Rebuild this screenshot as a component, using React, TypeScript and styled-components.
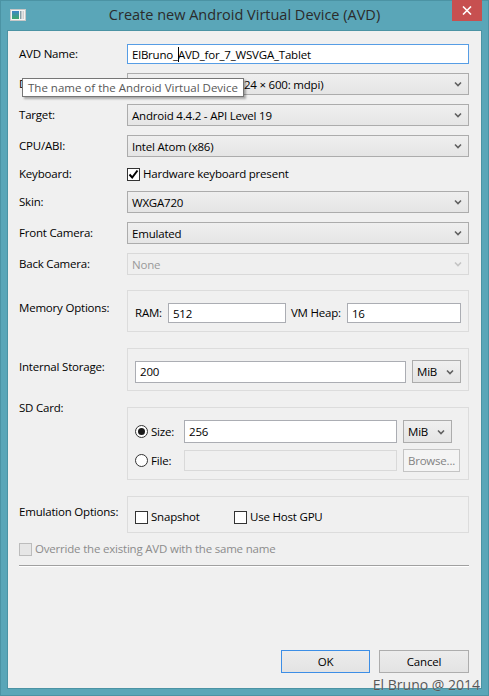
import styled, { createGlobalStyle } from "styled-components"

const GlobalStyle = createGlobalStyle`
    html, body {
        margin: 0;
        padding: 0;
        background: #5aa6b8;
    }
    body {
        font-family: "Segoe UI", "Open Sans", "Noto Sans", sans-serif;
        font-size: 11.5px;
        letter-spacing: -0.2px;
        color: #000;
    }
    * {
        box-sizing: border-box;
    }
`

const Window = styled.div`
    position: relative;
    width: 489px;
    height: 696px;
    display: flex;
    flex-direction: column;
    background: #5aa6b8;
    box-shadow: inset 0 0 0 1px #4b93a4;
    overflow: hidden;
`
const TitleBar = styled.div`
    height: 31px;
    display: grid;
    grid-template-columns: 1fr auto 1fr;
    align-items: start;
`
const IconSlot = styled.div`
    padding: 9px 0 0 10px;
    line-height: 0;
`
const Title = styled.div`
    padding-top: 5px;
    font-size: 14.5px;
    letter-spacing: 0;
    line-height: 20px;
    color: #2b2b2b;
    white-space: nowrap;
`
const CloseButton = styled.div`
    justify-self: end;
    margin-right: 7px;
    width: 30px;
    height: 21px;
    background: #c75050;
    display: flex;
    align-items: center;
    justify-content: center;
`
const Client = styled.div`
    position: relative;
    flex: 1;
    margin: 0 8px 8px 8px;
    padding: 13px 12px 15px 11px;
    background: #f0f0f0;
    box-shadow: 0 0 0 1px #4b93a4;
    display: flex;
    flex-direction: column;
`
const Form = styled.div`
    display: grid;
    grid-template-columns: 108px 1fr;
    row-gap: 9px;
    align-items: center;
`
const Options = styled(Form)`
    margin-top: 15px;
    row-gap: 16px;
`
const Label = styled.div<{ $top?: boolean; $shift?: boolean }>`
    line-height: 16px;
    white-space: nowrap;
    align-self: ${p => (p.$top ? "start" : "center")};
    margin-top: ${p => (p.$top ? "-7px" : "0")};
    padding-bottom: ${p => (p.$shift ? "6px" : "0")};
`
const FieldLabel = styled.span`
    line-height: 16px;
    white-space: nowrap;
`
const TextBox = styled.div<{ $focused?: boolean; $disabled?: boolean; $h?: number; $w?: number }>`
    height: ${p => p.$h ?? 20}px;
    min-width: 0;
    flex: ${p => (p.$w ? `0 0 ${p.$w}px` : "1")};
    display: flex;
    align-items: center;
    padding: 0 4px;
    background: ${p => (p.$disabled ? "#f0f0f0" : "#fff")};
    border: 1px solid ${p => (p.$focused ? "#569de5" : p.$disabled ? "#d9d9d9" : "#abadb3")};
    white-space: nowrap;
    overflow: hidden;
`
const Caret = styled.span`
    display: inline-block;
    width: 1px;
    height: 15px;
    background: #000;
    margin: 0 -1px 0 0;
`
const ComboBox = styled.div<{ $disabled?: boolean; $w?: number }>`
    height: ${p => (p.$w ? 23 : 22)}px;
    width: ${p => (p.$w ? `${p.$w}px` : "auto")};
    flex: none;
    display: flex;
    align-items: center;
    justify-content: space-between;
    padding: 0 6px 0 4px;
    color: ${p => (p.$disabled ? "#9a9a9a" : "#000")};
    background: ${p => (p.$disabled ? "#efefef" : "linear-gradient(#efefef, #e5e5e5)")};
    border: 1px solid ${p => (p.$disabled ? "#d9d9d9" : "#acacac")};
    white-space: nowrap;
    overflow: hidden;
`
const CheckRow = styled.div`
    display: flex;
    align-items: center;
    gap: 3px;
    height: 16px;
    line-height: 16px;
    white-space: nowrap;
`
const Box = styled.span<{ $disabled?: boolean }>`
    width: 13px;
    height: 13px;
    flex: none;
    display: flex;
    align-items: center;
    justify-content: center;
    background: ${p => (p.$disabled ? "#e6e6e6" : "#fff")};
    border: 1px solid ${p => (p.$disabled ? "#bcbcbc" : "#333")};
`
const Radio = styled.span<{ $on?: boolean }>`
    width: 13px;
    height: 13px;
    flex: none;
    border-radius: 50%;
    border: 1px solid #333;
    background: #fff;
    display: flex;
    align-items: center;
    justify-content: center;
    &::after {
        content: "";
        display: ${p => (p.$on ? "block" : "none")};
        width: 7px;
        height: 7px;
        border-radius: 50%;
        background: #1a1a1a;
    }
`
const DisabledText = styled.span`
    color: #8c8c8c;
`
const Group = styled.div<{ $pad: string }>`
    border: 1px solid #dcdcdc;
    padding: ${p => p.$pad};
`
const InlineRow = styled.div`
    display: flex;
    align-items: center;
    gap: 6px;
`
const MemoryRow = styled(InlineRow)`
    gap: 0;
    & > span {
        margin-right: 6px;
    }
    & > div + span {
        margin-left: 5px;
    }
`
const SdGrid = styled.div`
    display: grid;
    grid-template-columns: 43px 1fr 57px;
    column-gap: 6px;
    row-gap: 6px;
    align-items: center;
`
const EmulationRow = styled.div`
    display: grid;
    grid-template-columns: 99px auto;
`
const PushButton = styled.div<{ $default?: boolean; $disabled?: boolean; $w?: number }>`
    width: ${p => (p.$w ? `${p.$w}px` : "auto")};
    height: 23px;
    display: flex;
    align-items: center;
    justify-content: center;
    color: ${p => (p.$disabled ? "#838383" : "#000")};
    background: ${p => (p.$disabled ? "#f4f4f4" : "linear-gradient(#ececec, #e3e3e3)")};
    border: 1px solid ${p => (p.$default ? "#3c8ee6" : p.$disabled ? "#c4c4c4" : "#adadad")};
    white-space: nowrap;
`
const Override = styled(CheckRow)`
    margin-top: 8px;
    color: #8c8c8c;
`
const Separator = styled.div`
    margin-top: 8px;
    border-top: 1px solid #a0a0a0;
    border-bottom: 1px solid #fff;
`
const ButtonBar = styled.div`
    margin-top: auto;
    display: flex;
    justify-content: flex-end;
    gap: 9px;
`
const Tooltip = styled.div`
    position: absolute;
    left: 14px;
    top: 47px;
    height: 19px;
    padding: 0 5px;
    display: flex;
    align-items: center;
    letter-spacing: 0;
    background: #fff;
    color: #575757;
    border: 1px solid #767676;
    box-shadow: 2px 2px 2px rgba(0, 0, 0, 0.3);
    white-space: nowrap;
`
const Watermark = styled.div`
    position: absolute;
    right: 9px;
    bottom: 2px;
    font-size: 14px;
    letter-spacing: 0;
    line-height: 18px;
    color: #585858;
    text-shadow: 0 0 1px rgba(255, 255, 255, 0.5);
    white-space: nowrap;
`

function Chevron({ disabled }: { disabled?: boolean }) {
    return (
        <svg width="8" height="6" viewBox="0 0 8 6">
            <path d="M1 1.5 L4 4.5 L7 1.5" fill="none" stroke={disabled ? "#c4c4c4" : "#606060"} strokeWidth="1.6" />
        </svg>
    )
}

function Check() {
    return (
        <svg width="11" height="11" viewBox="0 0 11 11">
            <path d="M1.5 5.5 L4.2 8.5 L9.5 1.5" fill="none" stroke="#000" strokeWidth="2" />
        </svg>
    )
}

function AppIcon() {
    return (
        <svg width="16" height="12" viewBox="0 0 16 12">
            <defs>
                <linearGradient id="scr" x1="0" y1="0" x2="0" y2="1">
                    <stop offset="0" stopColor="#3f86c8" />
                    <stop offset="1" stopColor="#3fa86a" />
                </linearGradient>
            </defs>
            <rect x="0.5" y="0.5" width="15" height="11" fill="#f4f4f4" stroke="#c8c8c8" />
            <rect x="2" y="2" width="7" height="8" fill="url(#scr)" />
            <rect x="10" y="2" width="1.5" height="8" fill="#8aa0a8" />
            <rect x="12.5" y="2" width="1.5" height="8" fill="#d0d0d0" />
        </svg>
    )
}

function Combo({ text, disabled, w }: { text: string; disabled?: boolean; w?: number }) {
    return (
        <ComboBox $disabled={disabled} $w={w}>
            <span>{text}</span>
            <Chevron disabled={disabled} />
        </ComboBox>
    )
}

function CreateAvdDialog() {
    return (
        <Window>
            <TitleBar>
                <IconSlot>
                    <AppIcon />
                </IconSlot>
                <Title>Create new Android Virtual Device (AVD)</Title>
                <CloseButton>
                    <svg width="10" height="9" viewBox="0 0 10 9">
                        <path d="M1 0.5 L9 8.5 M9 0.5 L1 8.5" stroke="#fff" strokeWidth="1.6" />
                    </svg>
                </CloseButton>
            </TitleBar>
            <Client>
                <Form>
                    <Label>AVD Name:</Label>
                    <TextBox $focused>
                        ElBruno_<Caret />AVD_for_7_WSVGA_Tablet
                    </TextBox>
                    <Label>Device:</Label>
                    <Combo text={"7\" WSVGA (Tablet) (1024 × 600: mdpi)"} />
                    <Label>Target:</Label>
                    <Combo text="Android 4.4.2 - API Level 19" />
                    <Label>CPU/ABI:</Label>
                    <Combo text="Intel Atom (x86)" />
                    <Label>Keyboard:</Label>
                    <CheckRow>
                        <Box>
                            <Check />
                        </Box>
                        Hardware keyboard present
                    </CheckRow>
                    <Label>Skin:</Label>
                    <Combo text="WXGA720" />
                    <Label>Front Camera:</Label>
                    <Combo text="Emulated" />
                    <Label>Back Camera:</Label>
                    <Combo text="None" disabled />
                </Form>

                <Options>
                    <Label $shift>Memory Options:</Label>
                    <Group $pad="12px 7px 8px 7px">
                        <MemoryRow>
                            <FieldLabel>RAM:</FieldLabel>
                            <TextBox $w={118}>512</TextBox>
                            <FieldLabel>VM Heap:</FieldLabel>
                            <TextBox>16</TextBox>
                        </MemoryRow>
                    </Group>

                    <Label $shift>Internal Storage:</Label>
                    <Group $pad="11px 7px 7px 7px">
                        <InlineRow>
                            <TextBox $h={22}>200</TextBox>
                            <Combo text="MiB" w={49} />
                        </InlineRow>
                    </Group>

                    <Label $top>SD Card:</Label>
                    <Group $pad="12px 8px 7px 7px">
                        <SdGrid>
                            <CheckRow>
                                <Radio $on />
                                Size:
                            </CheckRow>
                            <TextBox $h={23}>256</TextBox>
                            <Combo text="MiB" w={49} />
                            <CheckRow>
                                <Radio />
                                File:
                            </CheckRow>
                            <TextBox $h={21} $disabled />
                            <PushButton $disabled>Browse...</PushButton>
                        </SdGrid>
                    </Group>

                    <Label $shift>Emulation Options:</Label>
                    <Group $pad="12px 8px 7px 7px">
                        <EmulationRow>
                            <CheckRow>
                                <Box />
                                Snapshot
                            </CheckRow>
                            <CheckRow>
                                <Box />
                                Use Host GPU
                            </CheckRow>
                        </EmulationRow>
                    </Group>
                </Options>

                <Override>
                    <Box $disabled />
                    <DisabledText>Override the existing AVD with the same name</DisabledText>
                </Override>
                <Separator />

                <ButtonBar>
                    <PushButton $default $w={89}>OK</PushButton>
                    <PushButton $w={90}>Cancel</PushButton>
                </ButtonBar>

                <Tooltip>The name of the Android Virtual Device</Tooltip>
            </Client>
            <Watermark>El Bruno @ 2014</Watermark>
        </Window>
    )
}

export default function App() {
    return (
        <>
            <GlobalStyle />
            <CreateAvdDialog />
        </>
    )
}
